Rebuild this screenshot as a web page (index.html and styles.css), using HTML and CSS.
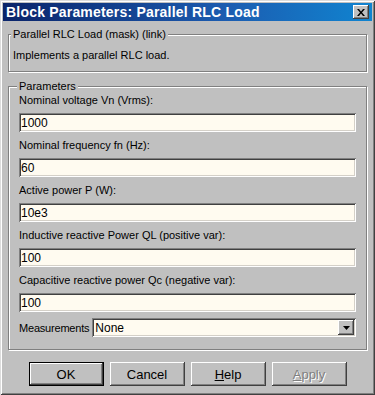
FILE: index.html
```html
<!DOCTYPE html>
<html lang="en">
<head>
    <meta charset="UTF-8">
    <meta name="viewport" content="width=device-width, initial-scale=1.0">
    <title>Block Parameters: Parallel RLC Load</title>
    <link rel="stylesheet" href="styles.css">
</head>
<body>

<div class="window">
    <!-- title bar -->
    <div class="titlebar">
        <span class="title">Block Parameters: Parallel RLC Load</span>
        <button class="close" aria-label="Close">
            <svg width="8" height="7" viewBox="0 0 8 7">
                <path d="M0 0h2l2 2.5L6 0h2L5 3.5 8 7H6L4 4.5 2 7H0l3-3.5z" fill="#000"/>
            </svg>
        </button>
    </div>

    <div class="content">
        <!-- description -->
        <fieldset class="group desc">
            <legend>Parallel RLC Load (mask) (link)</legend>
            <p>Implements a parallel RLC load.</p>
        </fieldset>

        <!-- parameters -->
        <fieldset class="group params">
            <legend>Parameters</legend>
            <label class="field">
                <span>Nominal voltage Vn (Vrms):</span>
                <input type="text" value="1000">
            </label>
            <label class="field">
                <span>Nominal frequency fn (Hz):</span>
                <input type="text" value="60">
            </label>
            <label class="field">
                <span>Active power P (W):</span>
                <input type="text" value="10e3">
            </label>
            <label class="field">
                <span>Inductive reactive Power QL (positive var):</span>
                <input type="text" value="100">
            </label>
            <label class="field">
                <span>Capacitive reactive power Qc (negative var):</span>
                <input type="text" value="100">
            </label>
            <div class="select-row">
                <span>Measurements</span>
                <div class="combo">
                    <span class="combo-value">None</span>
                    <span class="combo-btn">
                        <svg width="7" height="4" viewBox="0 0 7 4"><path d="M0 0h7L3.5 4z" fill="#000"/></svg>
                    </span>
                </div>
            </div>
        </fieldset>

        <!-- buttons -->
        <div class="buttons">
            <button class="btn default">OK</button>
            <button class="btn">Cancel</button>
            <button class="btn"><u>H</u>elp</button>
            <button class="btn disabled"><u>A</u>pply</button>
        </div>
    </div>
</div>

</body>
</html>
```

FILE: styles.css
```css
body {
    margin: 0;
    font-family: "Liberation Sans", Arial, sans-serif;
    font-size: 11px;
    color: #000;
}
.window {
    width: 375px;
    height: 395px;
    box-sizing: border-box;
    background-color: #c0c0c0;
    padding: 3px;
    box-shadow: inset 1px 1px 0 #dcdcdc, inset -1px -1px 0 #404040, inset 2px 2px 0 #fff, inset -2px -2px 0 #808080;
}
.titlebar {
    height: 18px;
    display: flex;
    align-items: center;
    justify-content: space-between;
    padding: 0 3px 0 3px;
    background: linear-gradient(to right, #0a246a, #1c5cb0 60%, #1084d0);
}
.title {
    color: white;
    font-weight: bold;
    font-size: 14px;
    letter-spacing: 0.2px;
}
.close {
    width: 16px;
    height: 14px;
    padding: 0;
    border: none;
    background-color: #c0c0c0;
    display: flex;
    align-items: center;
    justify-content: center;
    box-shadow: inset -1px -1px 0 #404040, inset 1px 1px 0 #fff, inset -2px -2px 0 #808080;
}
.content {
    padding: 7px 5px 0 5px;
}
.group {
    margin: 0;
    border: 1px solid #808080;
    box-shadow: inset 1px 1px 0 #fff, 1px 1px 0 #fff;
    padding: 0 10px 0 10px;
    min-width: 0;
}
.group legend {
    padding: 0 2px;
    margin-left: -2px;
    line-height: 13px;
    background-color: #c0c0c0;
}
.desc {
    height: 44px;
    box-sizing: border-box;
    padding: 0 4px;
}
.desc p {
    margin: 8px 0 0 0;
}
.params {
    margin-top: 8px;
    height: 270px;
    box-sizing: border-box;
    padding-top: 0;
}
.field {
    display: flex;
    flex-direction: column;
    margin-bottom: 6px;
}
.field span {
    line-height: 14px;
    margin-bottom: 6px;
}
.field input, .combo {
    height: 19px;
    box-sizing: border-box;
    margin: 0;
    padding: 0 2px;
    font: inherit;
    font-size: 12px;
    background-color: #fffbf0;
    border: none;
    outline: none;
    box-shadow: inset 1px 1px 0 #808080, inset -1px -1px 0 #fff, inset 2px 2px 0 #404040, inset -2px -2px 0 #d4d0c8;
}
.select-row {
    display: flex;
    align-items: center;
    gap: 3px;
    margin-top: 4px;
}
.select-row > span {
    letter-spacing: -0.2px;
}
.combo {
    flex: 1;
    display: flex;
    align-items: center;
    justify-content: space-between;
    padding: 2px 2px 2px 3px;
}
.combo-btn {
    width: 16px;
    height: 15px;
    display: flex;
    align-items: center;
    justify-content: center;
    background-color: #c0c0c0;
    box-shadow: inset -1px -1px 0 #404040, inset 1px 1px 0 #fff, inset -2px -2px 0 #808080;
}
.buttons {
    display: flex;
    justify-content: center;
    gap: 6px;
    margin-top: 12px;
}
.btn {
    width: 75px;
    height: 24px;
    padding: 0;
    font: inherit;
    font-size: 13px;
    background-color: #c0c0c0;
    border: none;
    box-shadow: inset -1px -1px 0 #404040, inset 1px 1px 0 #fff, inset -2px -2px 0 #808080;
}
.btn.default {
    border: 1px solid #000;
    box-shadow: inset -1px -1px 0 #404040, inset 1px 1px 0 #fff, inset -2px -2px 0 #808080;
}
.btn.disabled {
    color: #808080;
    text-shadow: 1px 1px 0 #fff;
}
```
